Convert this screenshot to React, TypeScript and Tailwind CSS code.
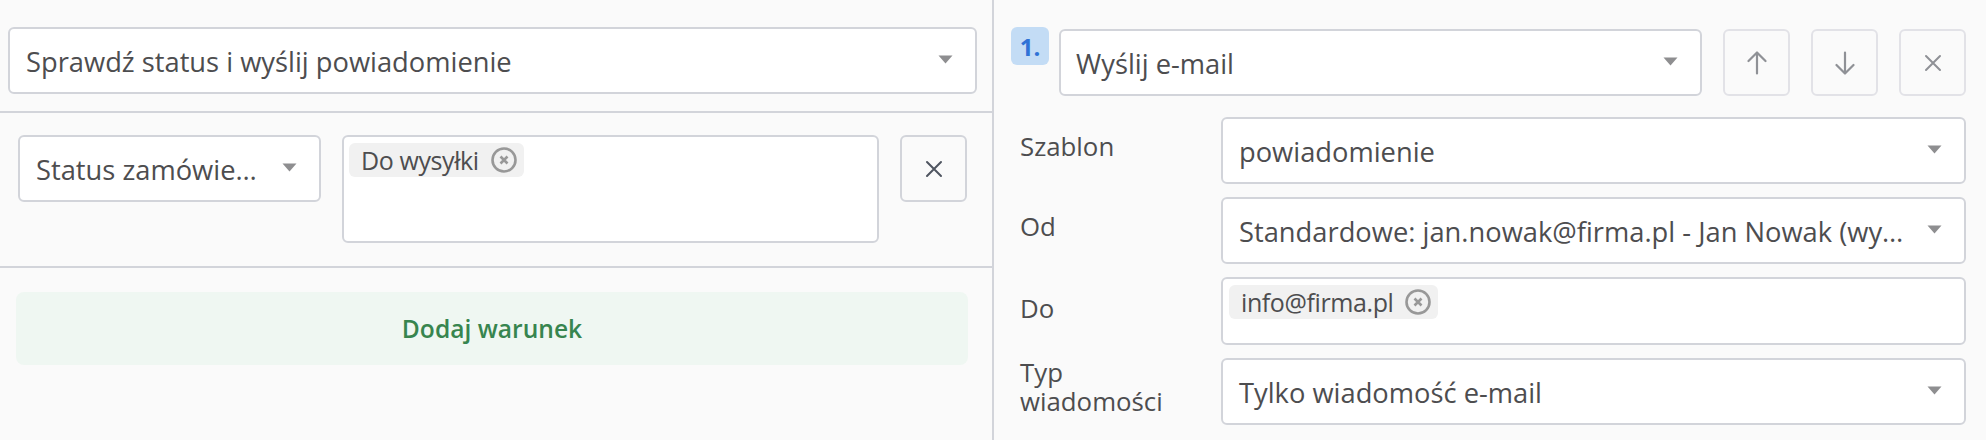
import React from "react";

const Caret = () => (
  <svg width="15" height="9" viewBox="0 0 15 9" className="relative -top-[1px] shrink-0">
    <path d="M0.5 0.5H14.5L7.5 8.5Z" fill="#8e8e90" />
  </svg>
);

const Select = ({ text, className, pad = "pl-[16px]" }: { text: string; className: string; pad?: string }) => (
  <div className={`flex h-[67px] items-center justify-between gap-[15px] rounded-[6px] border-2 border-[#d2d4da] bg-white pr-[22px] ${pad} ${className}`}>
    <span className="min-w-0 whitespace-nowrap pt-[3px] text-[27.3px] leading-[36px] text-[#4d4d4f]">{text}</span>
    <Caret />
  </div>
);

const Tag = ({ text }: { text: string }) => (
  <div className="flex h-[34px] w-fit items-center gap-[12px] rounded-[6px] bg-[#f1f1f1] pl-[12px] pr-[7px]">
    <span className="text-[25px] leading-[30px] tracking-[-0.4px] text-[#4d4d4f]">{text}</span>
    <svg width="26" height="26" viewBox="0 0 26 26">
      <circle cx="13" cy="13" r="11.5" fill="none" stroke="#989898" strokeWidth="2.6" />
      <path d="M9.5 9.5L16.5 16.5M16.5 9.5L9.5 16.5" stroke="#989898" strokeWidth="2.6" />
    </svg>
  </div>
);

const IconButton = ({ children, light }: { children: React.ReactNode; light?: boolean }) => (
  <div className={`flex h-[67px] w-[67px] shrink-0 items-center justify-center rounded-[6px] border-2 ${light ? "border-[#e2e2e7]" : "border-[#d2d4da]"} bg-[#fafafa]`}>
    {children}
  </div>
);

const XIcon = ({ color }: { color: string }) => (
  <svg width="18" height="18" viewBox="0 0 18 18">
    <path d="M2 2L16 16M16 2L2 16" stroke={color} strokeWidth="2" strokeLinecap="round" />
  </svg>
);

const Arrow = ({ down }: { down?: boolean }) => (
  <svg width="20" height="24" viewBox="0 0 20 24" className={down ? "rotate-180" : ""}>
    <path d="M10 22.5V2M1.5 10L10 1.5L18.5 10" fill="none" stroke="#8f9196" strokeWidth="2.2" strokeLinecap="round" strokeLinejoin="round" />
  </svg>
);

const Label = ({ children }: { children: React.ReactNode }) => (
  <div className="w-[201px] shrink-0 pr-[30px] text-[25.8px] leading-[29px] text-[#4d4d4f]">{children}</div>
);

export default function App() {
  return (
    <div className="flex h-[440px] w-[1986px] overflow-hidden bg-[#fafafa] [font-family:'Open_Sans',sans-serif]">
      <div className="w-[994px] shrink-0 border-r-2 border-[#d2d4da]">
        <div className="h-[113px] border-b-2 border-[#d2d4da] pl-[8px] pr-[16px] pt-[27px]">
          <Select text="Sprawdź status i wyślij powiadomienie" className="w-[969px]" />
        </div>
        <div className="flex h-[155px] items-start gap-[21px] border-b-2 border-[#d2d4da] pl-[18px] pt-[22px]">
          <Select text="Status zamówie…" className="w-[303px]" />
          <div className="h-[108px] w-[537px] rounded-[6px] border-2 border-[#d2d4da] bg-white pl-[5px] pt-[6px]">
            <Tag text="Do wysyłki" />
          </div>
          <IconButton><XIcon color="#4f5560" /></IconButton>
        </div>
        <div className="ml-[16px] mt-[24px] flex h-[73px] w-[952px] items-center justify-center rounded-[8px] bg-[#eff7f2] pt-[1px] text-[24.6px] font-semibold text-[#37854f]">
          Dodaj warunek
        </div>
      </div>

      <div className="min-w-0 flex-1 pl-[17px] pr-[20px] pt-[27px]">
        <div className="flex items-start">
          <div className="flex h-[38px] w-[38px] shrink-0 items-center justify-center rounded-[6px] bg-[#c3dcf5] pt-[2px] text-[24px] font-bold text-[#2f72d6]">1.</div>
          <div className="ml-[10px] mt-[2px] flex items-center gap-[21px]">
            <Select text="Wyślij e-mail" className="w-[643px]" pad="pl-[15px]" />
            <IconButton light><Arrow /></IconButton>
            <IconButton light><Arrow down /></IconButton>
            <IconButton light><XIcon color="#8f9196" /></IconButton>
          </div>
        </div>
        <div className="mt-[21px] flex flex-col gap-[13px] pl-[9px]">
          <div className="flex items-center">
            <Label><span className="relative -top-[4px]">Szablon</span></Label>
            <Select text="powiadomienie" className="w-[745px]" />
          </div>
          <div className="flex items-center">
            <Label><span className="relative -top-[4px]">Od</span></Label>
            <Select text="Standardowe: jan.nowak@firma.pl - Jan Nowak (wy…" className="w-[745px]" />
          </div>
          <div className="flex items-center">
            <Label><span className="relative -top-[3px]">Do</span></Label>
            <div className="h-[68px] w-[745px] rounded-[6px] border-2 border-[#d2d4da] bg-white pl-[6px] pt-[6px]">
              <Tag text="info@firma.pl" />
            </div>
          </div>
          <div className="flex items-center">
            <Label><div className="relative -top-[5px]">Typ wiadomości</div></Label>
            <Select text="Tylko wiadomość e-mail" className="w-[745px]" />
          </div>
        </div>
      </div>
    </div>
  );
}
